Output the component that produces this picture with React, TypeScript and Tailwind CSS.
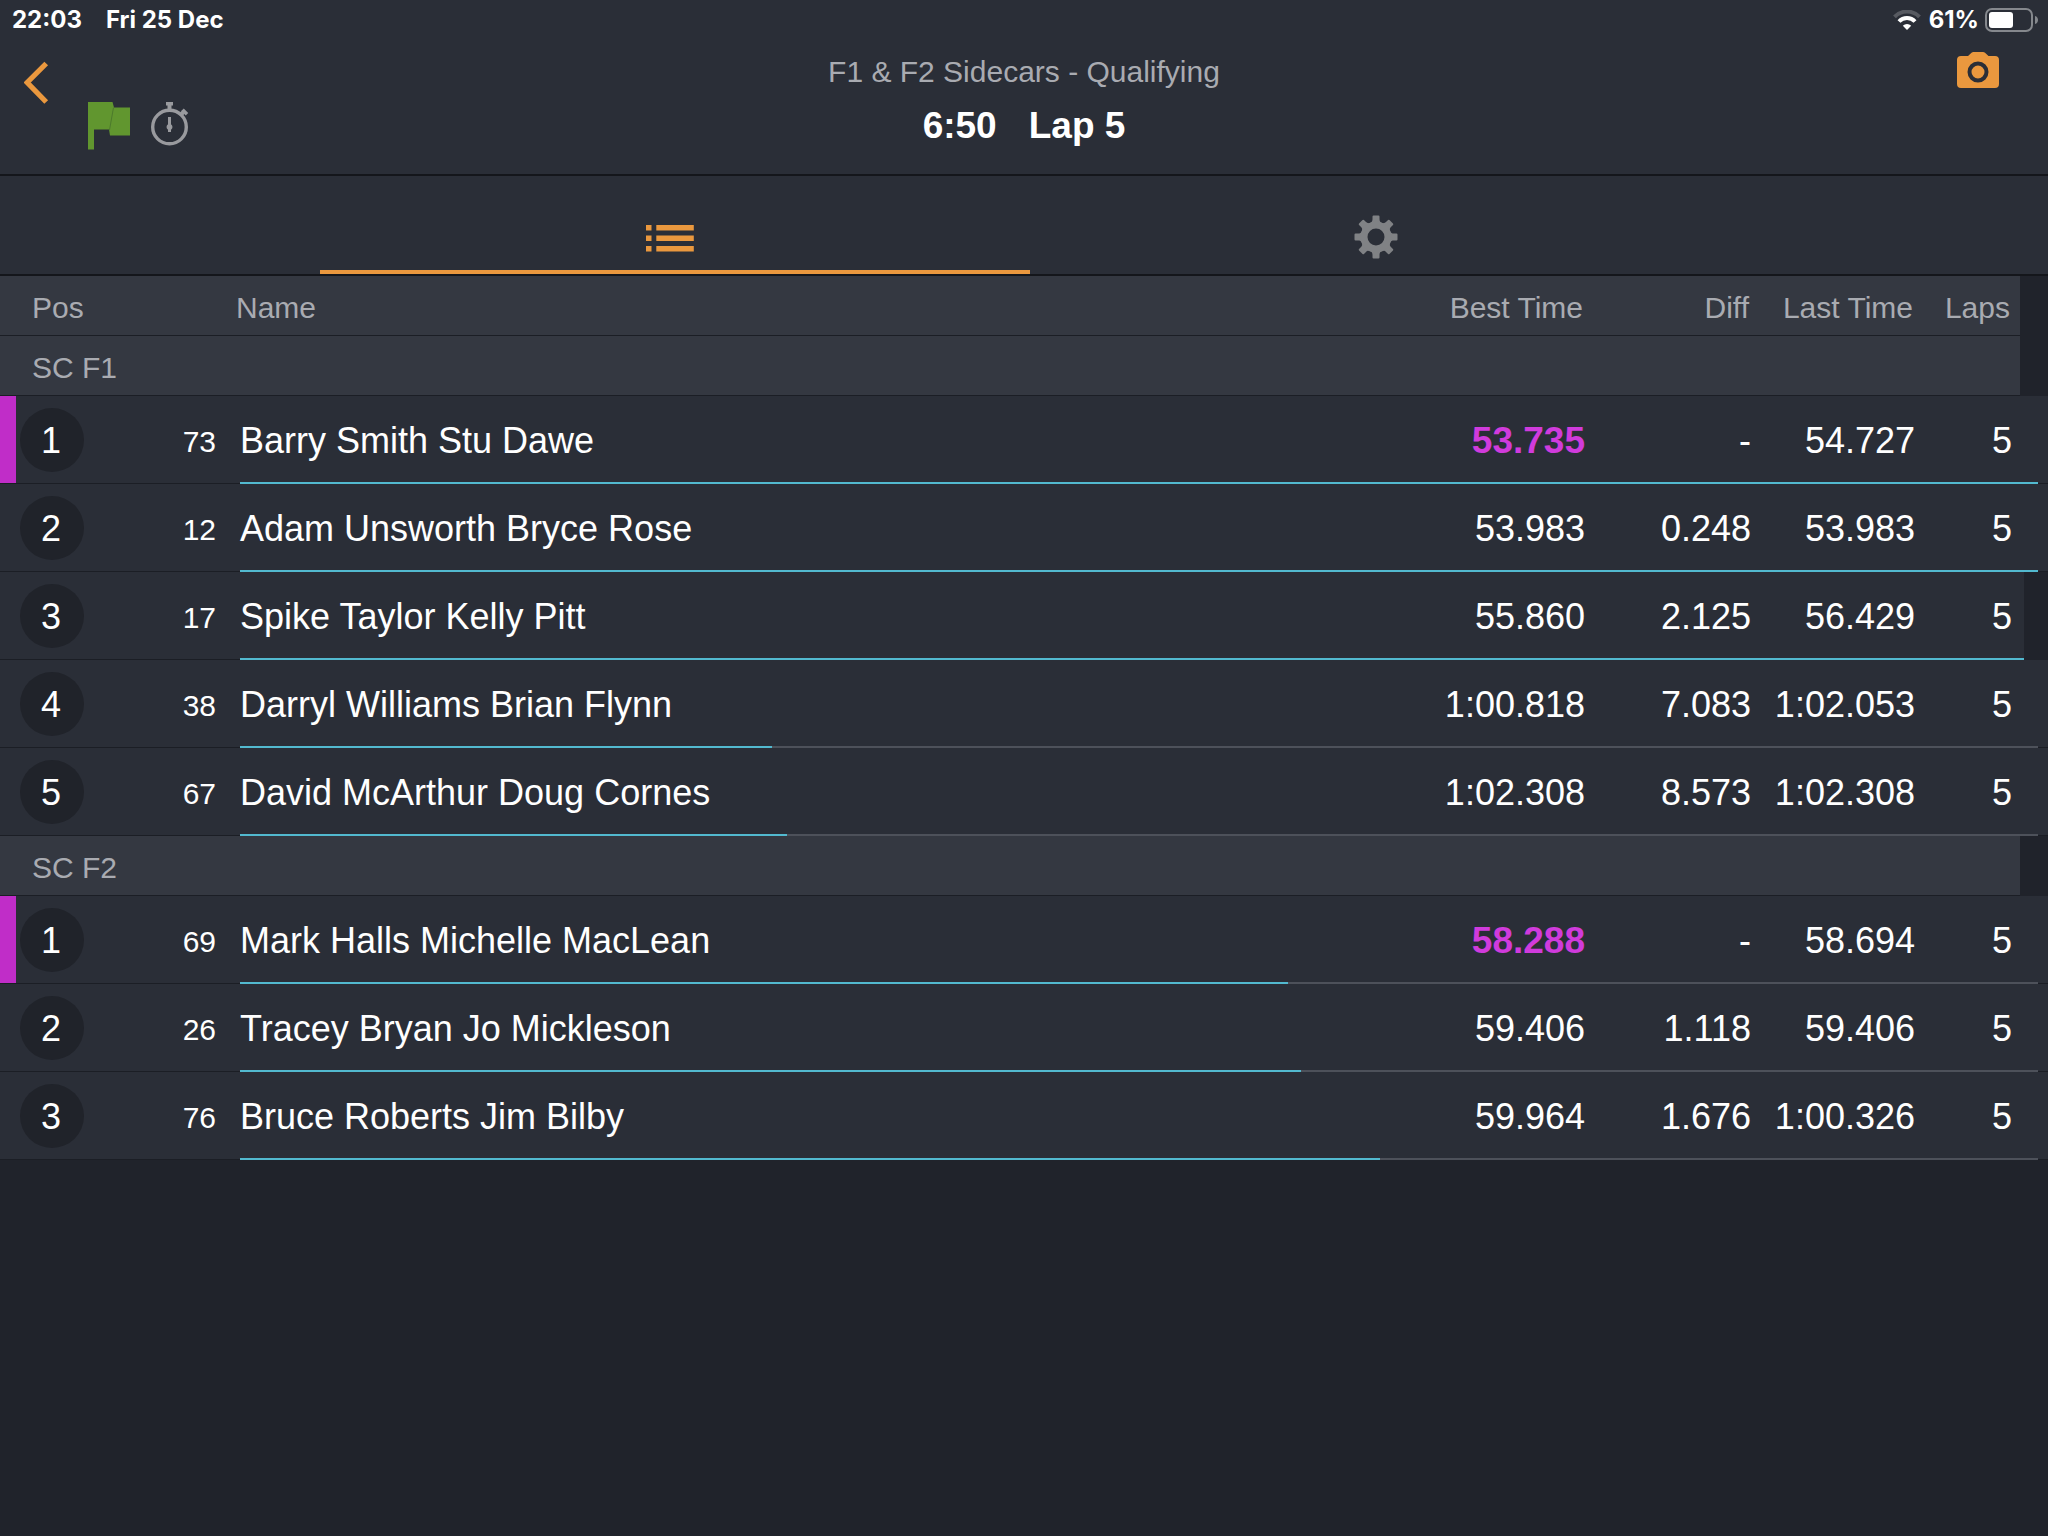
import React from "react";

type Entry = {
  pos: number;
  num: string;
  name: string;
  best: string;
  diff: string;
  last: string;
  laps: number;
  progress: number;
  fastest?: boolean;
  shifted?: boolean;
};

const groups: { title: string; entries: Entry[] }[] = [
  {
    title: "SC F1",
    entries: [
      { pos: 1, num: "73", name: "Barry Smith Stu Dawe", best: "53.735", diff: "-", last: "54.727", laps: 5, progress: 100, fastest: true },
      { pos: 2, num: "12", name: "Adam Unsworth Bryce Rose", best: "53.983", diff: "0.248", last: "53.983", laps: 5, progress: 100 },
      { pos: 3, num: "17", name: "Spike Taylor Kelly Pitt", best: "55.860", diff: "2.125", last: "56.429", laps: 5, progress: 100, shifted: true },
      { pos: 4, num: "38", name: "Darryl Williams Brian Flynn", best: "1:00.818", diff: "7.083", last: "1:02.053", laps: 5, progress: 29.6 },
      { pos: 5, num: "67", name: "David McArthur Doug Cornes", best: "1:02.308", diff: "8.573", last: "1:02.308", laps: 5, progress: 30.4 },
    ],
  },
  {
    title: "SC F2",
    entries: [
      { pos: 1, num: "69", name: "Mark Halls Michelle MacLean", best: "58.288", diff: "-", last: "58.694", laps: 5, progress: 58.3, fastest: true },
      { pos: 2, num: "26", name: "Tracey Bryan Jo Mickleson", best: "59.406", diff: "1.118", last: "59.406", laps: 5, progress: 59 },
      { pos: 3, num: "76", name: "Bruce Roberts Jim Bilby", best: "59.964", diff: "1.676", last: "1:00.326", laps: 5, progress: 63.4 },
    ],
  },
];

function StatusBar() {
  return (
    <div className="flex h-10 items-center justify-between pl-3 pr-2 font-['Inter',sans-serif] text-[24px] font-bold leading-none text-white">
      <div className="flex gap-6">
        <span>22:03</span>
        <span>Fri 25 Dec</span>
      </div>
      <div className="flex items-center gap-1.5">
        <svg width="30" height="20" viewBox="0 0 30 20" fill="none" aria-label="Wi-Fi">
          <path d="M1.500 6.800A17.500 17.500 0 0 1 26.500 6.800" stroke="#575a61" strokeWidth="4" />
          <path d="M6 11.500A11 11 0 0 1 22 11.500" stroke="#fff" strokeWidth="4" />
          <path d="M14 20l-4.200-4.300a6 6 0 0 1 8.400 0z" fill="#fff" />
        </svg>
        <span>61%</span>
        <svg width="55" height="24" viewBox="0 0 55 24" aria-label="Battery">
          <rect x="1" y="1" width="46" height="22" rx="6" fill="none" stroke="#85888d" strokeWidth="2" />
          <rect x="4" y="4" width="24" height="16" rx="3" fill="#fff" />
          <path d="M50 8c4 1 4 7 0 8z" fill="#85888d" />
        </svg>
      </div>
    </div>
  );
}

function FlagIcon() {
  return (
    <svg width="42" height="48" viewBox="0 0 42 48" fill="#61962f" aria-label="Green flag">
      <path d="M0 0h24.500l1.500 5.500h16V33.500H22l-1-6H6V47.500H0z" />
      <path d="M25.500 5.500L21.500 28" stroke="#4c7a2c" strokeWidth="1" />
    </svg>
  );
}

function StopwatchIcon() {
  return (
    <svg width="38" height="44" viewBox="0 0 38 44" fill="none" aria-label="Stopwatch">
      <circle cx="18.500" cy="25" r="16.800" stroke="#999a9e" strokeWidth="3.400" />
      <path d="M15 0h7v3.500h-1.500V8.500h-4V3.500H15z" fill="#999a9e" />
      <path d="M29 13.500l4-4" stroke="#999a9e" strokeWidth="4" />
      <path d="M31.500 7.800l4.500 4.500" stroke="#999a9e" strokeWidth="3.500" />
      <path d="M17 15h3v7.200a3.400 3.400 0 0 1 0 5.600V30h-3v-2.200a3.400 3.400 0 0 1 0-5.600z" fill="#999a9e" />
    </svg>
  );
}

function GearIcon() {
  return (
    <svg width="44" height="44" viewBox="-22 -22 44 44" fill="#808285">
      {[0, 45, 90, 135, 180, 225, 270, 315].map((a) => (
        <path key={a} transform={`rotate(${a})`} d="M-6.500-13.500C-4-15-3.500-16-3.500-18v-2.500q0-1 1-1h5q1 0 1 1v2.500C3.500-16 4-15 6.500-13.500z" />
      ))}
      <path fillRule="evenodd" d="M-15.500 0a15.500 15.500 0 1 0 31 0a15.500 15.500 0 1 0-31 0zM-8.500 0a8.500 8.500 0 1 1 17 0a8.500 8.500 0 1 1-17 0z" />
    </svg>
  );
}

function Header() {
  return (
    <header className="border-b-2 border-[#14161b] bg-[#2a2e37]">
      <StatusBar />
      <div className="grid h-[134px] grid-cols-3">
        <div className="flex items-start pl-6">
          <button type="button" aria-label="Back" className="mt-5">
            <svg width="26" height="44" viewBox="0 0 26 44" fill="none" stroke="#ea983e" strokeWidth="5.200">
              <path d="M22.200 3.500L3.200 22.500L22.200 42" />
            </svg>
          </button>
          <div className="ml-[38px] mt-[62px] flex gap-[21px]">
            <FlagIcon />
            <StopwatchIcon />
          </div>
        </div>
        <div className="flex flex-col items-center whitespace-nowrap pt-3">
          <h1 className="text-[30px] leading-10 text-[#a9abb1]">F1 &amp; F2 Sidecars - Qualifying</h1>
          <div className="flex gap-8 pt-2 text-[37px] font-bold leading-[52px] text-white">
            <span>6:50</span>
            <span>Lap 5</span>
          </div>
        </div>
        <div className="flex items-start justify-end pr-12">
          <button type="button" aria-label="Take snapshot" className="mt-3">
            <svg width="44" height="38" viewBox="0 0 44 38">
              <path d="M5 4h7l3.500-3.200Q16.300 0 17.500 0h9.500q1.200 0 2 .8L32.500 4H39q4 0 4 4v24q0 4-4 4H5q-4 0-4-4V8q0-4 4-4z" fill="#ea983e" />
              <circle cx="22" cy="20" r="8.500" fill="none" stroke="#2a2e37" strokeWidth="4" />
            </svg>
          </button>
        </div>
      </div>
    </header>
  );
}

function Tabs() {
  return (
    <nav className="border-b-2 border-[#14161b] bg-[#2a2e37]">
      <div className="mx-auto grid h-[98px] w-[68.75%] grid-cols-2">
        <button type="button" aria-label="Results" className="relative flex justify-center pt-[49px]">
          <svg width="52" height="28" viewBox="0 0 52 28" fill="#ea983e">
            <path d="M0 0h5.500v5.600H0zM10.300 0h37.500v5.600H10.300zM0 10.500h5.500v5.600H0zM10.300 10.500h37.500v5.600H10.300zM0 21h5.500v5.600H0zM10.300 21h37.500v5.600H10.300z" />
          </svg>
          <span className="absolute -right-1.5 bottom-0 left-0 h-1 bg-[#ea983e]" />
        </button>
        <button type="button" aria-label="Settings" className="flex justify-center pt-[39px]">
          <GearIcon />
        </button>
      </div>
    </nav>
  );
}

function EntryRow({ e }: { e: Entry }) {
  return (
    <tr className="relative h-[88px] text-[36px] text-white [&>td]:border-b [&>td]:border-[#1b1e25] [&>td]:bg-[#2a2e37]">
      <td className="relative pl-5">
        {e.fastest && <span className="absolute bottom-0 left-0 top-0 w-4 bg-[#c02dc8]" />}
        <span className="relative flex size-16 items-center justify-center rounded-full bg-[#20232a] pr-0.5 pt-0.5">{e.pos}</span>
      </td>
      <td className="pt-1 text-right text-[30px]">{e.num}</td>
      <td className="pl-6 pt-0.5 text-left">
        {e.name}
        <span className={e.shifted ? "absolute bottom-0 left-[240px] right-6 h-0.5 bg-[#4d515a]" : "absolute bottom-0 left-[240px] right-2.5 h-0.5 bg-[#4d515a]"}>
          <span className="block h-0.5 bg-[#52b9cf]" style={{ width: `${e.progress}%` }} />
        </span>
      </td>
      <td className={e.fastest ? "pt-0.5 text-right text-[37px] font-bold text-[#d03bdc]" : "pt-0.5 text-right"}>{e.best}</td>
      <td className="pt-0.5 text-right">{e.diff}</td>
      <td className="pt-0.5 text-right">{e.last}</td>
      <td className="pr-2 pt-0.5 text-right">{e.laps}</td>
      {e.shifted ? <td className="border-b-0! border-l-4 border-l-[#2a2e37]! bg-[#20232b]!" /> : <td />}
    </tr>
  );
}

export default function App() {
  return (
    <div className="min-h-screen bg-[#20232b] font-['Liberation_Sans',sans-serif]">
      <Header />
      <Tabs />
      <table className="w-full table-fixed border-separate border-spacing-0 whitespace-nowrap">
        <colgroup>
          <col className="w-[120px]" />
          <col className="w-[96px]" />
          <col />
          <col className="w-[176px]" />
          <col className="w-[166px]" />
          <col className="w-[164px]" />
          <col className="w-[105px]" />
          <col className="w-7" />
        </colgroup>
        <thead>
          <tr className="h-[60px] text-[30px] text-[#a9abb1] [&>th]:border-b [&>th]:border-[#1b1e25] [&>th]:bg-[#343841] [&>th]:pt-1 [&>th]:font-normal">
            <th scope="col" className="pl-8 text-left">Pos</th>
            <th />
            <th scope="col" className="pl-5 text-left">Name</th>
            <th scope="col" className="pr-0.5 text-right">Best Time</th>
            <th scope="col" className="pr-0.5 text-right">Diff</th>
            <th scope="col" className="pr-0.5 text-right">Last Time</th>
            <th scope="col" className="pr-2.5 text-right">Laps</th>
            <td />
          </tr>
        </thead>
        {groups.map((g) => (
          <tbody key={g.title}>
            <tr className="h-[60px] text-[30px] text-[#a9abb1]">
              <th scope="rowgroup" colSpan={7} className="border-b border-[#1b1e25] bg-[#343841] pl-8 pt-1 text-left font-normal">{g.title}</th>
              <td />
            </tr>
            {g.entries.map((e) => (
              <EntryRow key={e.num} e={e} />
            ))}
          </tbody>
        ))}
      </table>
    </div>
  );
}
